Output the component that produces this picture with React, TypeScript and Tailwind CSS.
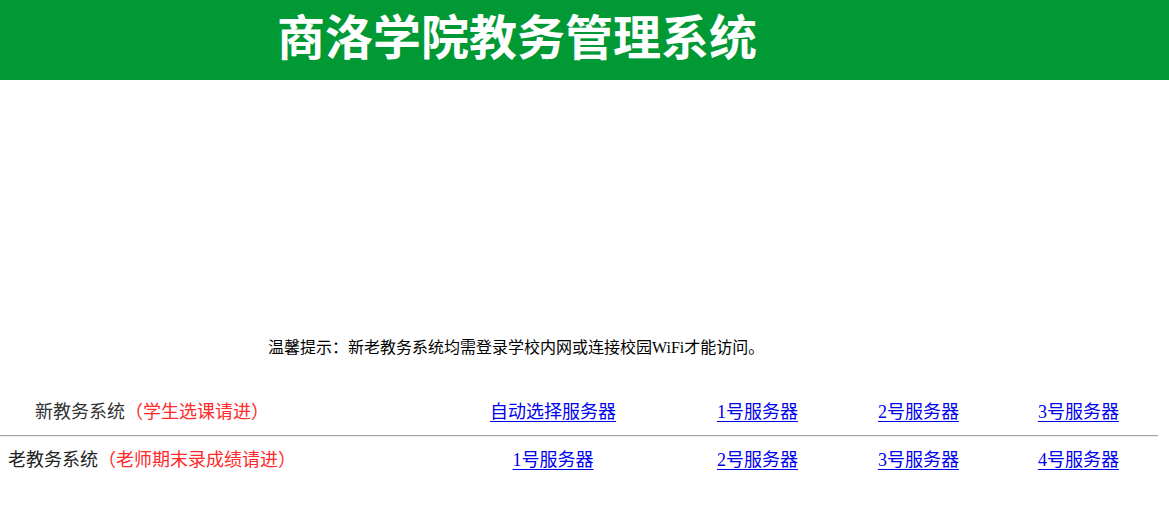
import React from "react";

const font = { fontFamily: '"Liberation Serif", "Noto Sans CJK SC", serif' };

function Link({ children }: { children: React.ReactNode }) {
  return (
    <a href="#" className="text-[#0000ee] underline underline-offset-[3px]">
      {children}
    </a>
  );
}

export default function App() {
  return (
    <div className="w-[1169px] h-[510px] bg-white overflow-hidden" style={font}>
      <div className="h-[80px] bg-[#009933] pl-[277px] pt-[1px]">
        <h1
          className="text-white font-bold text-[48px] leading-[66px]"
          style={{ fontFamily: '"Noto Sans CJK SC", sans-serif' }}
        >
          商洛学院教务管理系统
        </h1>
      </div>
      <p className="mt-[260px] pl-[268px] text-[16px] leading-[16px] text-black">
        温馨提示：新老教务系统均需登录学校内网或连接校园WiFi才能访问。
      </p>
      <div className="mt-[33px] w-[1158px] text-[18px] leading-[18px]">
        <div className="grid grid-cols-[429px_248px_161px_161px_159px] items-center h-[47px] border-b border-b-[#a0a0a0]">
          <div className="pl-[35px] text-[#333]">
            新教务系统<span className="text-[#ff2a2a]">（学生选课请进）</span>
          </div>
          <div className="text-center"><Link>自动选择服务器</Link></div>
          <div className="text-center"><Link>1号服务器</Link></div>
          <div className="text-center"><Link>2号服务器</Link></div>
          <div className="text-center"><Link>3号服务器</Link></div>
        </div>
        <div className="border-t border-t-[#eeeeee] grid grid-cols-[429px_248px_161px_161px_159px] items-center h-[46px]">
          <div className="pl-[8px] text-[#222]">
            老教务系统<span className="text-[#ff2a2a]">（老师期末录成绩请进）</span>
          </div>
          <div className="text-center"><Link>1号服务器</Link></div>
          <div className="text-center"><Link>2号服务器</Link></div>
          <div className="text-center"><Link>3号服务器</Link></div>
          <div className="text-center"><Link>4号服务器</Link></div>
        </div>
      </div>
    </div>
  );
}
